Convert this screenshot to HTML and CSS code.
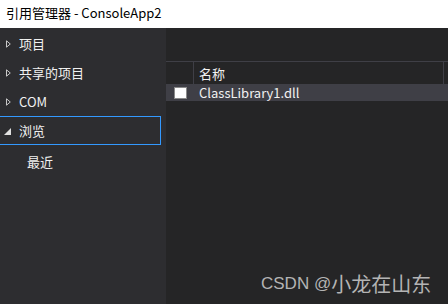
FILE: index.html
```html
<!DOCTYPE html>
<html lang="zh">
<head>
<meta charset="utf-8">
<link rel="stylesheet" href="styles.css">
</head>
<body>
<div class="window">
  <div class="titlebar">引用管理器 - ConsoleApp2</div>
  <div class="main">
    <div class="nav">
      <div class="item"><svg class="tri" width="5" height="8" viewBox="0 0 5 8"><polygon points="0.5,0.8 4.3,4 0.5,7.2" fill="#2d2d30" stroke="#c8c8c8" stroke-width="1"/></svg><span>项目</span></div>
      <div class="item"><svg class="tri" width="5" height="8" viewBox="0 0 5 8"><polygon points="0.5,0.8 4.3,4 0.5,7.2" fill="#2d2d30" stroke="#c8c8c8" stroke-width="1"/></svg><span>共享的项目</span></div>
      <div class="item"><svg class="tri" width="5" height="8" viewBox="0 0 5 8"><polygon points="0.5,0.8 4.3,4 0.5,7.2" fill="#2d2d30" stroke="#c8c8c8" stroke-width="1"/></svg><span>COM</span></div>
      <div class="item selected"><svg class="tri-f" width="7" height="7" viewBox="0 0 7 7"><polygon points="7,0 7,7 0,7" fill="#e0e0e0"/></svg><span>浏览</span></div>
      <div class="item sub"><span>最近</span></div>
    </div>
    <div class="content">
      <div class="grid">
        <div class="row header">
          <div class="cell check"></div>
          <div class="cell name">名称</div>
          <div class="cell tail"></div>
        </div>
        <div class="row data">
          <div class="cell check"><span class="box"></span></div>
          <div class="cell name">ClassLibrary1.dll</div>
        </div>
      </div>
      <div class="watermark"><span class="wm-lat">CSDN @</span><span class="wm-cjk">小龙在山东</span></div>
    </div>
  </div>
</div>
</body>
</html>
```
FILE: styles.css
```css
* { box-sizing: border-box; }
html, body { margin: 0; padding: 0; }
body {
  width: 448px;
  height: 304px;
  overflow: hidden;
  font-family: "Noto Sans CJK SC", "Noto Sans", sans-serif;
  font-size: 13px;
}
.window { display: flex; flex-direction: column; height: 304px; }
.titlebar {
  height: 28px;
  background: #ffffff;
  color: #000;
  padding: 4px 0 0 6px;
  line-height: 18px;
  font-size: 13px;
}
.main { flex: 1; display: flex; min-height: 0; }
.nav {
  width: 166px;
  background: #2d2d30;
  padding-top: 1px;
  color: #f1f1f1;
}
.item {
  height: 29px;
  display: flex;
  align-items: center;
  padding-left: 6px;
  gap: 8px;
  line-height: 18px;
}
.tri { display: block; flex: none; }
.tri-f { display: block; flex: none; margin-top: 2px; }
.item.selected {
  border: 1px solid #3399ff;
  border-left: none;
  width: 161px;
  padding-left: 4px;
  gap: 8px;
}
.item.sub { padding-left: 27px; height: 34px; }
.content {
  flex: 1;
  background: #252526;
  position: relative;
  padding-top: 33px;
}
.grid { border-top: 1px solid #3f3f46; }
.row { display: flex; align-items: center; }
.row.header { height: 22px; background: #252526; color: #f1f1f1; }
.row.header .cell { height: 22px; display: flex; align-items: center; }
.cell.check { width: 28px; justify-content: center; display: flex; }
.row.header .cell.check { border-right: 1px solid #3f3f46; }
.cell.name { flex: 1; padding-left: 5px; }
.row.header .cell.name { border-right: 1px solid #3f3f46; }
.cell.tail { width: 4px; }
.row.data { height: 17px; background: #3f3f46; color: #f1f1f1; }
.box {
  width: 13px;
  height: 12px;
  background: #ffffff;
  border: 1px solid #8a8a8a;
  display: inline-block;
}
.row.data .cell.name { padding-left: 5px; line-height: 17px; }
.watermark {
  position: absolute;
  left: 95px;
  top: 244px;
  height: 24px;
  color: #b4b4b4;
  display: flex;
  align-items: center;
  white-space: nowrap;
  line-height: 24px;
}
.wm-lat {
  font-family: "Liberation Sans", Arial, sans-serif;
  font-size: 17px;
}
.wm-cjk {
  font-family: "Noto Sans CJK SC", sans-serif;
  font-size: 20px;
}
```
